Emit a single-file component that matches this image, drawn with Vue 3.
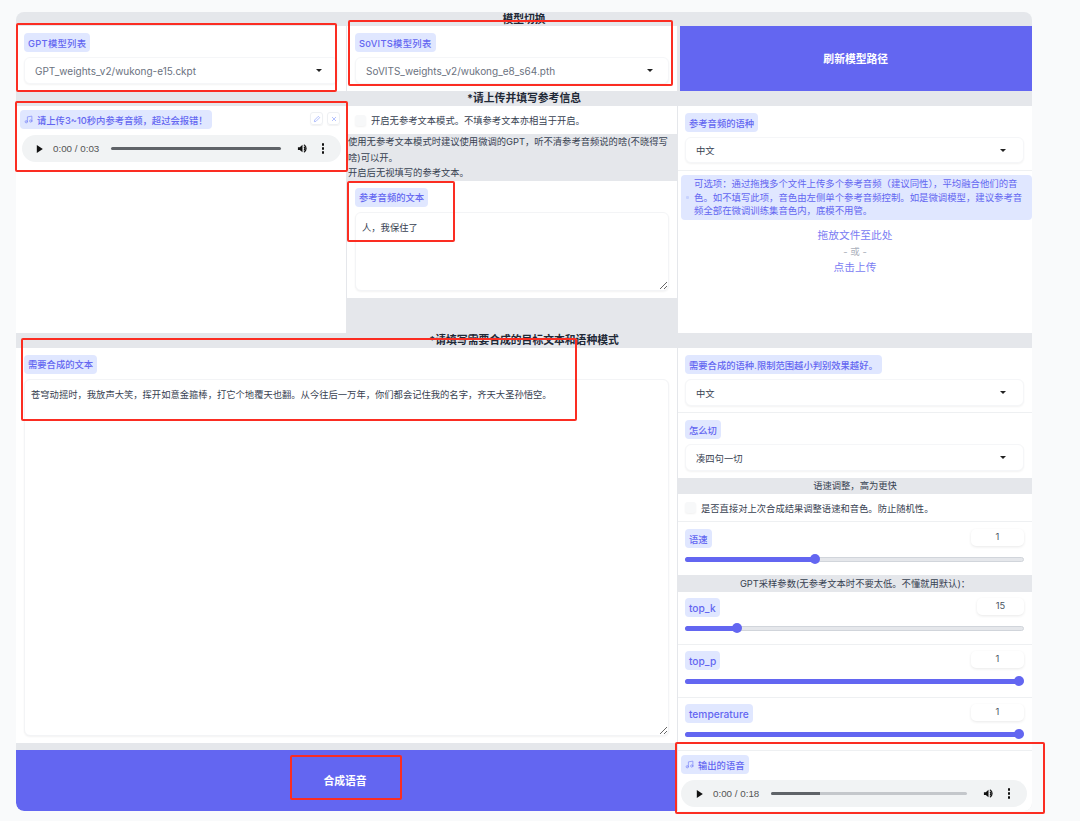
<template>
  <div class="page">
    <div class="panel">
      <div class="band band-top">模型切换</div>

      <!-- 模型选择 -->
      <div class="grid-three row-models">
        <div class="cell">
          <span class="tag tag-spaced">GPT模型列表</span>
          <div class="select muted"><span>GPT_weights_v2/wukong-e15.ckpt</span><i class="caret"></i></div>
        </div>
        <div class="cell">
          <span class="tag tag-spaced">SoVITS模型列表</span>
          <div class="select muted"><span>SoVITS_weights_v2/wukong_e8_s64.pth</span><i class="caret"></i></div>
        </div>
        <button class="primary refresh">刷新模型路径</button>
      </div>

      <div class="band band-title">*请上传并填写参考信息</div>

      <!-- 参考信息 -->
      <div class="grid-three row-ref">
        <div class="cell audio-cell">
          <div class="audio-head">
            <span class="tag tag-icon">
              <svg class="note" viewBox="0 0 24 24"><path d="M9 18V5l12-2v13" /><circle cx="6" cy="18" r="3" /><circle cx="18" cy="16" r="3" /></svg>
              请上传3~10秒内参考音频，超过会报错！
            </span>
            <div class="tools">
              <span class="tool">
                <svg viewBox="0 0 24 24"><path d="M4 20l1-5L16 4l4 4L9 19z" /></svg>
              </span>
              <span class="tool">
                <svg viewBox="0 0 24 24"><path d="M6 6l12 12M18 6L6 18" /></svg>
              </span>
            </div>
          </div>
          <div class="player">
            <svg class="play" viewBox="0 0 10 12"><path d="M1 0l9 6-9 6z" /></svg>
            <span class="time">0:00 / 0:03</span>
            <div class="track"></div>
            <svg class="volume" viewBox="0 0 24 24"><path d="M2 9v6h4l6 5V4L6 9z" /><path class="wave" d="M15 8a5 5 0 0 1 0 8M15 4a9 9 0 0 1 0 16" /></svg>
            <span class="dots"><i></i><i></i><i></i></span>
          </div>
        </div>

        <div class="ref-text">
          <label class="check-row check-ref"><span class="box"></span>开启无参考文本模式。不填参考文本亦相当于开启。</label>
          <div class="note-text">
            使用无参考文本模式时建议使用微调的GPT，听不清参考音频说的啥(不晓得写啥)可以开。<br />开启后无视填写的参考文本。
          </div>
          <div class="cell text-cell">
            <span class="tag">参考音频的文本</span>
            <textarea class="area area-ref" :value="refText"></textarea>
          </div>
        </div>

        <div class="cell lang-cell">
          <div class="lang-block">
            <span class="tag">参考音频的语种</span>
            <div class="select select-lang"><span>中文</span><i class="caret"></i></div>
          </div>
          <div class="info">
            <span class="info-dot"></span>
            <p>可选项：通过拖拽多个文件上传多个参考音频（建议同性），平均融合他们的音色。如不填写此项，音色由左侧单个参考音频控制。如是微调模型，建议参考音频全部在微调训练集音色内，底模不用管。</p>
          </div>
          <div class="drop">
            <span>拖放文件至此处</span>
            <span class="or">- 或 -</span>
            <span>点击上传</span>
          </div>
        </div>
      </div>

      <div class="band band-title">*请填写需要合成的目标文本和语种模式</div>

      <!-- 合成 -->
      <div class="row-synth">
        <div class="synth-left">
          <div class="cell target-cell">
            <span class="tag">需要合成的文本</span>
            <textarea class="area area-target" :value="targetText"></textarea>
          </div>
          <button class="primary synth">合成语音</button>
        </div>

        <div class="synth-right">
          <div class="opt-block">
            <span class="tag">需要合成的语种.限制范围越小判别效果越好。</span>
            <div class="select"><span>中文</span><i class="caret"></i></div>
          </div>
          <div class="opt-block opt-cut">
            <span class="tag">怎么切</span>
            <div class="select"><span>凑四句一切</span><i class="caret"></i></div>
          </div>
          <div class="sub-band">语速调整，高为更快</div>
          <label class="check-row check-speed"><span class="box"></span>是否直接对上次合成结果调整语速和音色。防止随机性。</label>

          <div class="slider-block">
            <div class="slider-head">
              <span class="tag">{{ speed.name }}</span>
              <span class="num">{{ speed.value }}</span>
            </div>
            <div class="slider"><div class="fill" :style="{ width: fillWidth(speed.pct) }"><i></i></div></div>
          </div>

          <div class="sub-band sub-band-gpt">GPT采样参数(无参考文本时不要太低。不懂就用默认)：</div>

          <div v-for="s in sampling" :key="s.name" class="slider-block sample">
            <div class="slider-head">
              <span class="tag tag-latin">{{ s.name }}</span>
              <span class="num" :class="{ short: s.value === 15 }">{{ s.value }}</span>
            </div>
            <div class="slider"><div class="fill" :style="{ width: fillWidth(s.pct) }"><i></i></div></div>
          </div>

          <div class="output">
            <span class="tag tag-icon">
              <svg class="note" viewBox="0 0 24 24"><path d="M9 18V5l12-2v13" /><circle cx="6" cy="18" r="3" /><circle cx="18" cy="16" r="3" /></svg>
              输出的语音
            </span>
            <div class="player player-out">
              <svg class="play" viewBox="0 0 10 12"><path d="M1 0l9 6-9 6z" /></svg>
              <span class="time">0:00 / 0:18</span>
              <div class="track track-out"><div class="played"></div></div>
              <svg class="volume" viewBox="0 0 24 24"><path d="M2 9v6h4l6 5V4L6 9z" /><path class="wave" d="M15 8a5 5 0 0 1 0 8M15 4a9 9 0 0 1 0 16" /></svg>
              <span class="dots"><i></i><i></i><i></i></span>
            </div>
          </div>
        </div>
      </div>
    </div>

    <!-- 红框标注 -->
    <div class="mark mark-gpt"></div>
    <div class="mark mark-sovits"></div>
    <div class="mark mark-audio"></div>
    <div class="mark mark-reftext"></div>
    <div class="mark mark-target"></div>
    <div class="mark mark-synth"></div>
    <div class="mark mark-output"></div>
  </div>
</template>

<script setup>
const refText = '人，我保住了'
const targetText = '苍穹动摇时，我放声大笑，挥开如意金箍棒，打它个地覆天也翻。从今往后一万年，你们都会记住我的名字，齐天大圣孙悟空。'

const speed = { name: '语速', value: 1, pct: 37.6 }
const sampling = [
  { name: 'top_k', value: 15, pct: 13.8 },
  { name: 'top_p', value: 1, pct: 100 },
  { name: 'temperature', value: 1, pct: 100 }
]

// 滑块圆点不超出轨道
function fillWidth(pct) {
  return `calc(7px + (100% - 10px) * ${pct / 100})`
}
</script>

<style>
html, body { margin: 0; background: #f9fafb; overflow: hidden; }
</style>

<style scoped>
.page {
  position: relative;
  box-sizing: border-box;
  height: 821px;
  padding: 12px 48px 10px 16px;
  background: #f9fafb;
  font-family: "Inter", "Noto Sans CJK SC", sans-serif;
  font-size: 9.3px;
  color: #374151;
  overflow: hidden;
}
.panel { width: 1016px; height: 799px; background: #e5e7eb; border-radius: 8px; overflow: hidden; }

.band { text-align: center; font-size: 10.8px; font-weight: 700; color: #1f2937; }
.band-top { height: 14px; line-height: 15px; }
.band-title { height: 15px; line-height: 15px; }

.grid-three { display: grid; grid-template-columns: 330px 330px 354px; gap: 1px; }
.row-models { height: 65px; }
.row-ref { height: 227px; }

.cell { background: #fff; box-sizing: border-box; padding: 7px 8px; display: flex; flex-direction: column; align-items: flex-start; }

.tag {
  display: inline-flex; align-items: center; height: 19px; padding: 0 4px; box-sizing: border-box;
  background: #e0e7ff; color: #6366f1; border-radius: 4px; font-size: 9.3px; font-weight: 500; white-space: nowrap;
}
.tag-spaced { letter-spacing: 0.3px; }
.tag-latin { font-size: 10.2px; }
.tag-icon { gap: 4px; }
.note { width: 9px; height: 9px; fill: none; stroke: #818cf8; stroke-width: 2; stroke-linecap: round; stroke-linejoin: round; }

.select {
  display: flex; justify-content: space-between; align-items: center; align-self: stretch;
  height: 27px; margin-top: 5px; padding: 0 11px 0 10px; box-sizing: border-box; background: #fff; border-radius: 6px;
  border: 1px solid #f5f6f8; box-shadow: 0 1px 2px rgba(0, 0, 0, 0.05); color: #374151;
}
.select.muted { color: #6b7280; font-size: 10px; }
.caret { width: 0; height: 0; border-left: 3px solid transparent; border-right: 3px solid transparent; border-top: 3.5px solid #222; margin-right: 4px; }
.select-lang .caret, .synth-right .caret { margin-right: 6px; }

.primary { border: 0; background: #6366f1; color: #fff; font: 700 10.8px "Inter", "Noto Sans CJK SC", sans-serif; }
.refresh { margin-left: 1.5px; padding-bottom: 3px; }
.synth { height: 61px; margin-top: 7px; padding: 0 3px 2px 0; border-radius: 0 0 0 8px; }

.audio-cell { padding: 4px 6px 0 4px; }
.audio-head { display: flex; justify-content: space-between; align-self: stretch; }
.tools { display: flex; gap: 4px; margin-top: 2px; }
.tool { width: 13px; height: 13px; border: 1px solid #eef0f3; box-sizing: border-box; border-radius: 3px; display: flex; align-items: center; justify-content: center; box-shadow: 0 1px 1px rgba(0, 0, 0, 0.05); }
.tool svg { width: 8px; height: 8px; fill: none; stroke: #a5b4fc; stroke-width: 2.5; }

.player { display: flex; align-items: center; height: 27px; margin: 6px 0 0 2px; width: 319px; box-sizing: border-box; padding: 0 15px 0 14px; background: #f1f3f4; border-radius: 14px; color: #555; font-size: 9.8px; font-family: "Liberation Sans", sans-serif; }
.play { width: 7px; height: 8px; flex: none; fill: #111; margin-right: 10px; }
.time { width: 58px; flex: none; white-space: nowrap; }
.track { flex: 1; height: 2.5px; background: #5f6368; border-radius: 2px; overflow: hidden; }
.volume { width: 11px; height: 11px; flex: none; margin: 0 14px 0 16px; fill: #111; }
.wave { fill: none; stroke: #111; stroke-width: 2.5; }
.dots { display: flex; flex-direction: column; gap: 1.5px; flex: none; margin-right: 2px; }
.dots i { width: 2.4px; height: 2.4px; border-radius: 50%; background: #111; }

.ref-text { display: flex; flex-direction: column; }
.check-row { display: flex; align-items: center; background: #fff; color: #374151; }
.box { width: 11px; height: 11px; border-radius: 3px; background: #f7f8f9; box-shadow: 0 1px 2px rgba(0, 0, 0, 0.06); flex: none; margin-right: 5px; }
.check-ref { height: 28px; padding-left: 8px; }
.note-text { height: 47px; padding-left: 1px; line-height: 15.5px; box-sizing: border-box; color: #374151; }
.text-cell { height: 117px; }

.area {
  align-self: stretch; box-sizing: border-box; margin-top: 5px; background: #fff; border: 1px solid #f3f4f6; border-radius: 6px; outline: 0;
  box-shadow: 0 1px 2px rgba(0, 0, 0, 0.05); font: 9.3px "Inter", "Noto Sans CJK SC", sans-serif; color: #374151; resize: vertical;
}
.area-ref { height: 80px; padding: 7px 6px; }
.area-target { height: 359px; padding: 7px 6px; }

.lang-cell { padding: 0; display: block; }
.lang-block { padding: 7px 8px 0 7px; height: 65px; box-sizing: border-box; border-bottom: 1px solid #eef0f2; display: flex; flex-direction: column; align-items: flex-start; }
.select-lang { height: 26px; }
.info { position: relative; margin: 4px 0 0 3px; height: 45px; padding: 2px 5px 0 13px; box-sizing: border-box; background: #e0e7ff; border-radius: 4px; color: #6366f1; line-height: 13.6px; font-size: 9.4px; }
.info p { margin: 0; }
.info-dot { position: absolute; left: 5px; top: 21px; width: 3px; height: 3px; background: #c7d2fe; border-radius: 1px; }
.drop { display: flex; flex-direction: column; align-items: center; margin-top: 8px; font-size: 10.7px; line-height: 16px; color: #6366f1; opacity: 0.85; }
.or { color: #9ca3af; font-size: 9.5px; }

.row-synth { display: grid; grid-template-columns: 661px 354px; gap: 1px; height: 463px; }
.synth-left { display: flex; flex-direction: column; }
.target-cell { height: 395px; }
.synth-right { background: #fff; display: flex; flex-direction: column; }

.opt-block { height: 65px; box-sizing: border-box; padding: 7px 8px 0 7px; border-bottom: 1px solid #eef0f2; display: flex; flex-direction: column; align-items: flex-start; }
.opt-cut { border-bottom: 0; }
.sub-band { height: 16px; line-height: 16px; text-align: center; background: #e5e7eb; color: #374151; }
.sub-band-gpt { height: 17px; line-height: 17px; }
.check-speed { height: 28px; padding-left: 7px; box-sizing: border-box; border-bottom: 1px solid #eef0f2; }

.slider-block { height: 53px; box-sizing: border-box; padding: 7px 8px 0 7px; border-bottom: 0; }
.sample { height: 53px; padding-top: 6px; border-bottom: 1px solid #eef0f2; }
.sample:last-of-type { height: 52px; }
.slider-head { display: flex; justify-content: space-between; align-items: flex-start; }
.num { width: 53px; height: 17px; line-height: 15px; text-align: center; color: #4b5563; border-radius: 5px; background: #fff; box-shadow: 0 1px 3px rgba(0, 0, 0, 0.09); font-size: 9.3px; }
.num.short { width: 47px; }
.slider { height: 5px; margin-top: 8.5px; background: #e5e7eb; border: 1px solid #d1d5db; border-radius: 3px; box-sizing: border-box; }
.fill { position: relative; height: 5px; margin: -1px 0 0 -1px; background: #6366f1; border-radius: 3px; }
.fill i { position: absolute; right: -5px; top: -2.5px; width: 10px; height: 10px; background: #6366f1; border-radius: 50%; }

.output { padding: 4px 0 0 3px; }
.player-out { width: 346px; margin: 6px 0 0 0; padding: 0 15px 0 15px; }
.player-out .time { width: 58px; }
.track-out { background: #c4c7cb; }
.played { width: 25%; height: 100%; background: #5f6368; }

.mark { position: absolute; box-sizing: border-box; border: 2px solid #fb2d22; border-radius: 2px; }
.mark-gpt { left: 16px; top: 23px; width: 321px; height: 69px; }
.mark-sovits { left: 348px; top: 20px; width: 325px; height: 66px; }
.mark-audio { left: 15px; top: 101px; width: 333px; height: 71px; }
.mark-reftext { left: 347px; top: 181px; width: 108px; height: 61px; }
.mark-target { left: 21px; top: 338px; width: 556px; height: 83px; }
.mark-synth { left: 290px; top: 755px; width: 112px; height: 45px; }
.mark-output { left: 675px; top: 742px; width: 370px; height: 72px; }
</style>
